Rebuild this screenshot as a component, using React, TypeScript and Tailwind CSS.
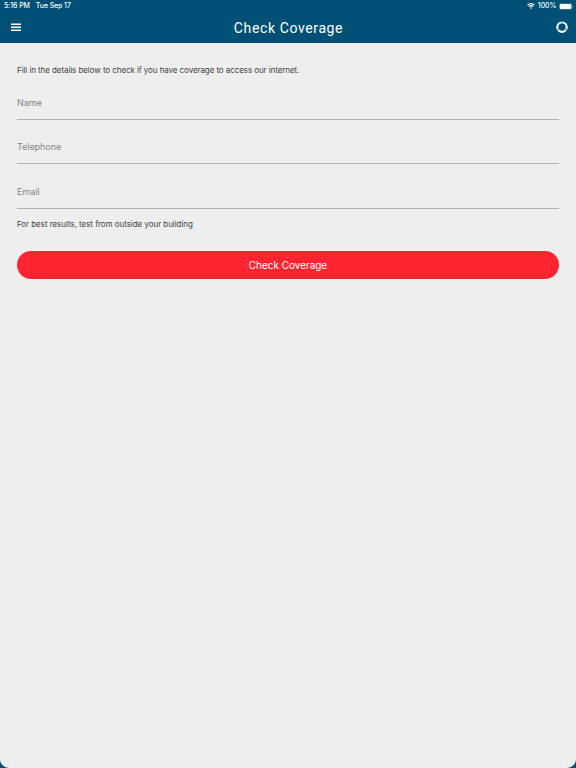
import { useState } from 'react';

interface Field {
  id: string;
  label: string;
  type: string;
}

const FIELDS: Field[] = [
  { id: 'name', label: 'Name', type: 'text' },
  { id: 'telephone', label: 'Telephone', type: 'tel' },
  { id: 'email', label: 'Email', type: 'email' },
];

function StatusBar() {
  return (
    <div className="flex h-3 items-center justify-between pl-1 pr-[3px] text-[7px] font-medium leading-3">
      <div className="flex gap-1.5">
        <span className="tracking-[-0.1px]">5:16 PM</span>
        <span className="tracking-[-0.1px]">Tue Sep 17</span>
      </div>
      <div className="flex items-center gap-[2.5px]">
        <svg width="8" height="6" viewBox="0 0 8 6" fill="none" stroke="currentColor" strokeWidth="1.2">
          <path d="M.5 2.1a5 5 0 0 1 7 0M1.8 3.5a3.1 3.1 0 0 1 4.4 0" />
          <path d="M4 5.9 2.9 4.7a1.6 1.6 0 0 1 2.2 0z" fill="currentColor" stroke="none" />
        </svg>
        <span className="tracking-[-0.05px]">100%</span>
        <svg width="14" height="7" viewBox="0 0 14 7">
          <rect x=".25" y=".25" width="12.5" height="6.5" rx="1.8" fill="none" stroke="currentColor" strokeOpacity=".5" strokeWidth=".5" />
          <rect x=".8" y=".9" width="11.4" height="5.2" rx="1.1" fill="currentColor" />
          <path d="M13.2 2.4v2.2c.4-.2.7-.6.7-1.1s-.3-.9-.7-1.1z" fill="currentColor" opacity=".6" />
        </svg>
      </div>
    </div>
  );
}

function Header() {
  return (
    <header className="h-[43px] bg-[#005075] text-white">
      <StatusBar />
      <div className="grid h-[31px] grid-cols-[1fr_auto_1fr] items-center pl-[11px] pr-2">
        <button aria-label="Menu" className="justify-self-start">
          <svg width="10" height="8" viewBox="0 0 10 8" fill="currentColor" className="mb-px block">
            <path d="M0 .6h10v1.3H0zM0 3.6h10v1.3H0zM0 6.6h10v1.3H0z" />
          </svg>
        </button>
        <h1 className="mr-[2px] font-['Roboto',sans-serif] text-[14px] leading-4 tracking-[0.62px]">
          Check Coverage
        </h1>
        <button aria-label="Usage" className="justify-self-end">
          <svg width="12" height="12" viewBox="0 0 12 12" fill="none" stroke="currentColor" strokeWidth="2.1" className="mb-px block">
            <circle cx="6" cy="6.2" r="4.7" pathLength="99" strokeDasharray="31 2" strokeDashoffset="23.75" />
          </svg>
        </button>
      </div>
    </header>
  );
}

export default function App() {
  const [values, setValues] = useState<Record<string, string>>({});

  return (
    <div className="flex h-screen flex-col bg-[#005075] font-['Inter',sans-serif]">
      <Header />
      <main className="flex-1 rounded-b-[9px] bg-[#eeeeee] px-[17px] pt-[21px] text-[#3f3f3f]">
        <p className="text-[8px] leading-3 tracking-[-0.08px]">
          Fill in the details below to check if you have coverage to access our internet.
        </p>

        {/* Form */}
        <form onSubmit={(e) => e.preventDefault()} className="-mt-[0.4px]">
          {FIELDS.map((field) => (
            <input
              key={field.id}
              type={field.type}
              aria-label={field.label}
              placeholder={field.label}
              value={values[field.id] ?? ''}
              onChange={(e) => setValues({ ...values, [field.id]: e.target.value })}
              className="block h-[44.33px] w-full border-b border-[#b0b0b0] bg-transparent pt-[10.7px] text-[9px] tracking-[-0.05px] outline-none placeholder:text-[#858585]"
            />
          ))}
          <p className="mt-[9px] text-[8px] leading-3 tracking-[-0.05px]">
            For best results, test from outside your building
          </p>
          <button
            type="submit"
            className="mt-[21.6px] block h-7 w-full rounded-full bg-[#ff2530] text-[10px] leading-7 tracking-[-0.03px] text-white"
          >
            Check Coverage
          </button>
        </form>
      </main>
    </div>
  );
}
